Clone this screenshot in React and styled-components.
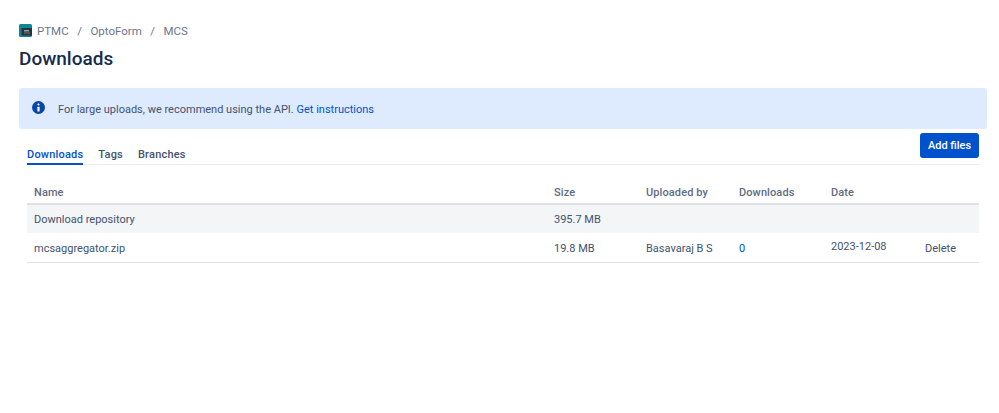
import styled, { createGlobalStyle } from 'styled-components'

const GlobalStyle = createGlobalStyle`
    html, body {
        margin: 0;
        padding: 0;
        background: #fff;
        font-family: Roboto, sans-serif;
        font-size: 11px;
        color: #42526e;
    }
`
const Page = styled.div`
    padding: 22px 12px 0 19px;
`
const Crumbs = styled.nav`
    display: flex;
    align-items: center;
    height: 17px;
    color: #6b778c;
    font-size: 11.5px;
`
const CrumbLogo = styled.svg`
    width: 13px;
    height: 13px;
    margin-right: 5px;
`
const Separator = styled.span`
    margin: 0 8.5px;
`
const Title = styled.h1`
    margin: 8px 0 0;
    height: 24px;
    font-size: 19px;
    line-height: 24px;
    font-weight: 500;
    color: #172b4d;
`
const Banner = styled.div`
    display: flex;
    align-items: center;
    height: 41px;
    margin-top: 17px;
    padding-left: 13px;
    background: #deebff;
    border-radius: 3px;
`
const BannerIcon = styled.svg`
    width: 13px;
    height: 13px;
    margin-right: 13px;
    margin-top: -2px;
`
const BannerText = styled.span`
    position: relative;
    top: 1px;
`
const TextLink = styled.a`
    color: #0052cc;
    text-decoration: none;
`
const Content = styled.div`
    margin: 0 8px;
`
const TabBar = styled.div`
    display: flex;
    align-items: flex-end;
    justify-content: space-between;
    height: 35px;
    border-bottom: 1px solid #ebecf0;
`
const Tabs = styled.div`
    display: flex;
    gap: 15px;
`
const Tab = styled.a`
    height: 20px;
    line-height: 19px;
    margin-bottom: -1px;
    font-weight: 500;
    letter-spacing: 0.2px;
    color: ${(props) => (props.$active ? '#0052cc' : '#42526e')};
    border-bottom: 2px solid ${(props) => (props.$active ? '#0052cc' : 'transparent')};
    box-sizing: border-box;
`
const AddButton = styled.button`
    width: 59px;
    height: 25px;
    margin-bottom: 6px;
    padding: 0;
    border: 0;
    border-radius: 3px;
    background: #0052cc;
    color: #fff;
    font: 500 11px Roboto, sans-serif;
`
const Table = styled.table`
    width: 100%;
    margin-top: 15px;
    border-collapse: collapse;
    table-layout: fixed;
`
const Head = styled.th`
    height: 24px;
    padding: 2px 0 0 ${(props) => props.$pad || 0}px;
    box-sizing: border-box;
    width: ${(props) => props.$w}px;
    text-align: left;
    font-weight: 500;
    letter-spacing: 0.1px;
    color: #5e6c84;
    border-bottom: 2px solid #dfe1e6;
`
const Row = styled.tr`
    height: 29px;
    background: ${(props) => (props.$shaded ? '#f4f5f7' : '#fff')};
    border-bottom: ${(props) => (props.$shaded ? '0' : '1px solid #dfe1e6')};
`
const Cell = styled.td`
    padding: ${(props) => props.$top || 0}px 0 0 ${(props) => props.$pad || 0}px;
`
const DateText = styled.span`
    position: relative;
    top: -2px;
`

const columns = [
    { label: 'Name', w: 527, pad: 7 },
    { label: 'Size', w: 92 },
    { label: 'Uploaded by', w: 93 },
    { label: 'Downloads', w: 92 },
    { label: 'Date', w: 94 },
    { label: '', w: 54 },
]

function App() {
    return (
        <Page>
            <GlobalStyle />
            <Crumbs>
                <CrumbLogo viewBox="0 0 13 13">
                    <rect width="13" height="13" rx="1.5" fill="#0f8595" />
                    <rect y="4" x="2.5" width="10.5" height="7.5" fill="#25343f" />
                    <rect x="5" y="6" width="5" height="1.5" fill="#8aa0ad" />
                    <rect x="5" y="8.5" width="6" height="1" fill="#9a6a5c" />
                </CrumbLogo>
                PTMC
                <Separator>/</Separator>
                OptoForm
                <Separator>/</Separator>
                MCS
            </Crumbs>
            <Title>Downloads</Title>
            <Banner>
                <BannerIcon viewBox="0 0 24 24">
                    <circle cx="12" cy="12" r="12" fill="#0747a6" />
                    <circle cx="12" cy="6.5" r="2" fill="#fff" />
                    <rect x="10" y="10.5" width="4" height="9" rx="1" fill="#fff" />
                </BannerIcon>
                <BannerText>
                    For large uploads, we recommend using the API.{' '}
                    <TextLink>Get instructions</TextLink>
                </BannerText>
            </Banner>
            <Content>
                <TabBar>
                    <Tabs>
                        <Tab $active>Downloads</Tab>
                        <Tab>Tags</Tab>
                        <Tab>Branches</Tab>
                    </Tabs>
                    <AddButton>Add files</AddButton>
                </TabBar>
                <Table>
                    <thead>
                        <tr>
                            {columns.map((col) => (
                                <Head key={col.label} $w={col.w} $pad={col.pad}>
                                    {col.label}
                                </Head>
                            ))}
                        </tr>
                    </thead>
                    <tbody>
                        <Row $shaded>
                            <Cell $pad={7} $top={1}>Download repository</Cell>
                            <Cell $top={1}>395.7 MB</Cell>
                            <Cell />
                            <Cell />
                            <Cell />
                            <Cell />
                        </Row>
                        <Row>
                            <Cell $pad={7} $top={2}>mcsaggregator.zip</Cell>
                            <Cell $top={2}>19.8 MB</Cell>
                            <Cell $top={2}>Basavaraj B S</Cell>
                            <Cell $top={2}>
                                <TextLink>0</TextLink>
                            </Cell>
                            <Cell $top={2}>
                                <DateText>2023-12-08</DateText>
                            </Cell>
                            <Cell $top={2}>Delete</Cell>
                        </Row>
                    </tbody>
                </Table>
            </Content>
        </Page>
    )
}

export default App
